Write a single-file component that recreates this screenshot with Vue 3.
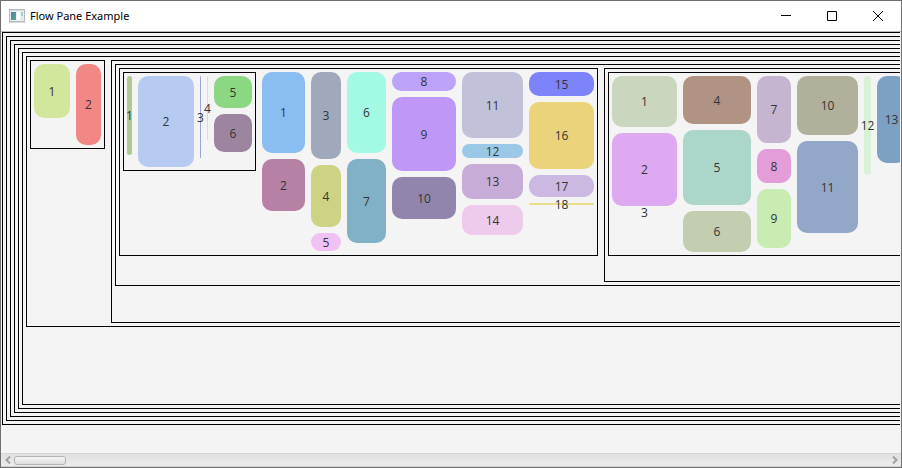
<script setup>
import { ref } from 'vue'

// Each pane is a list of columns; each tile is [label, height, colour].
const smallPane = [
  { width: 36, tiles: [['1', 54, '#d2e79b']] },
  { width: 25, tiles: [['2', 81, '#f28886']] },
]

const thinPane = [
  { width: 5, tiles: [['1', 79, '#b0c993']] },
  { width: 56, tiles: [['2', 91, '#b7caf1']] },
  { width: 1, tiles: [['3', 82, '#9da6d3']] },
  { width: 1, tiles: [['4', 64, '#eacfed']] },
  { width: 38, tiles: [['5', 32, '#8cd882'], ['6', 38, '#9d859f']] },
]

const middlePane = [
  { width: 43, tiles: [['1', 81, '#8abdf2'], ['2', 52, '#b681a5']] },
  { width: 30, tiles: [['3', 87, '#9fa9bb'], ['4', 62, '#ced383'], ['5', 18, '#f0c2f3']] },
  { width: 39, tiles: [['6', 81, '#a2fae5'], ['7', 84, '#80b1c7']] },
  { width: 64, tiles: [['8', 19, '#bda2f9'], ['9', 74, '#bf97f6'], ['10', 42, '#9185ad']] },
  { width: 61, tiles: [['11', 66, '#c2c1da'], ['12', 14, '#9bc8e7'], ['13', 35, '#c7acd8'], ['14', 30, '#eecaed']] },
  { width: 65, tiles: [['15', 24, '#7d83f8'], ['16', 67, '#ebd37c'], ['17', 22, '#ccb9e1'], ['18', 2, '#ebdc8a']] },
]

const rightPane = [
  { width: 65, tiles: [['1', 51, '#cad6bd'], ['2', 73, '#dda9f1'], ['3', 0, 'transparent']] },
  { width: 68, tiles: [['4', 48, '#b09382'], ['5', 75, '#acd6ca'], ['6', 41, '#c2ceaf']] },
  { width: 34, tiles: [['7', 67, '#c6b5d0'], ['8', 34, '#e39dd9'], ['9', 59, '#c9ecb2']] },
  { width: 61, tiles: [['10', 59, '#b1b09a'], ['11', 92, '#93a7c9']] },
  { width: 7, tiles: [['12', 99, '#d8f1d7']] },
  { width: 29, tiles: [['13', 87, '#7ca1c5']] },
]

const tileStyle = ([, height, color], width) => ({
  height: `${height}px`,
  background: color,
  borderRadius: `${Math.min(10, Math.ceil(width / 2), Math.ceil(height / 2))}px`,
})

const viewport = ref(null)
const scroll = (dx) => viewport.value.scrollBy({ left: dx })
</script>

<template>
  <div class="window">
    <header class="titlebar">
      <svg class="app-icon" width="16" height="14" viewBox="0 0 16 14" aria-hidden="true">
        <defs>
          <linearGradient id="pic" x1="0" y1="0" x2="1" y2="1">
            <stop offset="0" stop-color="#4c80b4" />
            <stop offset="1" stop-color="#4fae78" />
          </linearGradient>
        </defs>
        <rect x="0.5" y="0.5" width="15" height="12" fill="#eceff2" stroke="#b3b8bd" />
        <path d="M1 1.5h14" stroke="#d5dade" />
        <rect x="2" y="3" width="5" height="8" fill="url(#pic)" />
        <rect x="8" y="3" width="3" height="8" fill="#fff" />
        <rect x="12" y="3" width="2" height="4" fill="#a9cfc4" />
        <rect x="12" y="7" width="2" height="4" fill="#dfe5ea" />
        <path d="M0 13.5h16" stroke="#d9d9d9" />
      </svg>
      <h1 class="title">Flow Pane Example</h1>
      <div class="controls">
        <button type="button" aria-label="Minimize">
          <svg width="10" height="10" viewBox="0 0 10 10"><path d="M0 4.500h10" /></svg>
        </button>
        <button type="button" aria-label="Maximize">
          <svg width="10" height="10" viewBox="0 0 10 10"><path d="M.5.5h9v9h-9z" /></svg>
        </button>
        <button type="button" aria-label="Close">
          <svg width="10" height="10" viewBox="0 0 10 10"><path d="M0 0l10 10M10 0L0 10" /></svg>
        </button>
      </div>
    </header>

    <main ref="viewport" class="viewport">
      <div class="pane"><div class="pane"><div class="pane"><div class="pane"><div class="pane">
        <div class="pane root">
          <div class="pane">
            <div class="pane">
              <div v-for="(col, i) in smallPane" :key="i" class="column" :style="{ width: col.width + 'px' }">
                <div v-for="tile in col.tiles" :key="tile[0]" class="tile" :style="tileStyle(tile, col.width)">{{ tile[0] }}</div>
              </div>
            </div>
            <div class="pane outer">
              <div class="pane group">
                <div class="pane leaf">
                  <div class="pane">
                    <div v-for="(col, i) in thinPane" :key="i" class="column" :style="{ width: col.width + 'px' }">
                      <div v-for="tile in col.tiles" :key="tile[0]" class="tile" :style="tileStyle(tile, col.width)">{{ tile[0] }}</div>
                    </div>
                  </div>
                  <div v-for="(col, i) in middlePane" :key="i" class="column" :style="{ width: col.width + 'px' }">
                    <div v-for="tile in col.tiles" :key="tile[0]" class="tile" :style="tileStyle(tile, col.width)">{{ tile[0] }}</div>
                  </div>
                </div>
                <div class="pane side">
                  <div class="pane">
                    <div v-for="(col, i) in rightPane" :key="i" class="column" :style="{ width: col.width + 'px' }">
                      <div v-for="tile in col.tiles" :key="tile[0]" class="tile" :style="tileStyle(tile, col.width)">{{ tile[0] }}</div>
                    </div>
                  </div>
                </div>
              </div>
            </div>
          </div>
        </div>
      </div></div></div></div></div>
    </main>

    <div class="scrollbar">
      <button type="button" aria-label="Scroll left" @click="scroll(-60)">
        <svg width="6" height="8" viewBox="0 0 6 8"><path d="M5 .5L1.500 4L5 7.500" /></svg>
      </button>
      <div class="track"><div class="thumb"></div></div>
      <button type="button" aria-label="Scroll right" @click="scroll(60)">
        <svg width="6" height="8" viewBox="0 0 6 8"><path d="M1 .5L4.500 4L1 7.500" /></svg>
      </button>
    </div>
  </div>
</template>

<style>
body {
  margin: 0;
}
</style>

<style scoped>
.window {
  display: flex;
  flex-direction: column;
  box-sizing: border-box;
  height: 100vh;
  border: 1px solid #707070;
  background: #f4f4f4;
  color: #333;
  font: 12px/16px "Open Sans", "Noto Sans", sans-serif;
}

.titlebar {
  display: flex;
  flex: none;
  align-items: center;
  height: 30px;
  padding-left: 8px;
  border-bottom: 1px solid #b8b8b8;
  background: #fff;
  color: #000;
}

.title {
  flex: 1;
  margin: 0 0 0 5px;
  font-family: "Noto Sans", "Open Sans", sans-serif;
  font-size: 11px;
  font-weight: 400;
}

.controls {
  display: flex;
  align-self: stretch;
}

button {
  display: flex;
  align-items: center;
  justify-content: center;
  padding: 0;
  border: 0;
  background: none;
}

.controls button {
  width: 46px;
}

button svg {
  fill: none;
  stroke: #000;
}

.viewport {
  flex: 1;
  min-height: 0;
  margin: 0 1px;
  overflow: hidden;
}

.pane {
  display: flex;
  align-items: flex-start;
  gap: 6px;
  box-sizing: border-box;
  width: max-content;
  padding: 3px;
  border: 1px solid #000;
}

.root {
  min-height: 353px;
}

.outer {
  min-height: 263px;
}

.group {
  min-height: 222px;
}

.leaf {
  min-height: 188px;
}

.side {
  min-height: 214px;
}

.column {
  display: flex;
  flex: none;
  flex-direction: column;
  gap: 6px;
}

.tile {
  display: flex;
  flex: none;
  align-items: center;
  justify-content: center;
  box-sizing: border-box;
  padding-top: 1px;
  white-space: nowrap;
}

.scrollbar {
  display: flex;
  flex: none;
  box-sizing: border-box;
  height: 14px;
  border-top: 1px solid #d6d6d6;
  border-bottom: 1px solid #d0d0d0;
  background: linear-gradient(#e0e0e0, #ececec);
}

.scrollbar button {
  width: 13px;
}

.scrollbar svg {
  stroke: #a0a0a0;
  stroke-width: 2;
}

.track {
  display: flex;
  flex: 1;
  align-items: center;
}

.thumb {
  box-sizing: border-box;
  width: 6%;
  height: 9px;
  border: 1px solid #b3b3b3;
  border-radius: 3px;
  background: linear-gradient(#f6f6f6, #dedede);
}
</style>
